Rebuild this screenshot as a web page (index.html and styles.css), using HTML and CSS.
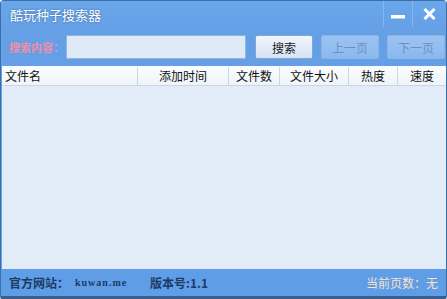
FILE: index.html
```html
<!DOCTYPE html>
<html lang="zh-cn">
<head>
    <meta charset="UTF-8">
    <title>酷玩种子搜索器</title>
    <link rel="stylesheet" href="styles.css">
</head>
<body>

<div class="window">
    <div class="titlebar">
        <span class="title">酷玩种子搜索器</span>
        <div class="controls">
            <span class="ctl min"><svg width="14" height="4" viewBox="0 0 14 4"><rect width="14" height="3.5" fill="#fff"/></svg></span>
            <span class="ctl close"><svg width="13" height="12" viewBox="0 0 13 12"><path d="M1.5 1 L11.5 11 M11.5 1 L1.5 11" stroke="#fff" stroke-width="3"/></svg></span>
        </div>
    </div>

    <div class="searchbar">
        <label class="lbl" for="q">搜索内容：</label>
        <input type="text" id="q" class="query">
        <button class="btn">搜索</button>
        <button class="btn off">上一页</button>
        <button class="btn off">下一页</button>
    </div>

    <div class="list">
        <div class="head">
            <span class="col c-name">文件名</span>
            <span class="col c-time">添加时间</span>
            <span class="col c-num">文件数</span>
            <span class="col c-size">文件大小</span>
            <span class="col c-hot">热度</span>
            <span class="col c-speed">速度</span>
        </div>
        <div class="rows"></div>
    </div>

    <div class="status">
        <span class="site">官方网站：</span>
        <span class="url">kuwan.me</span>
        <span class="ver">版本号:1.1</span>
        <span class="page">当前页数：无</span>
    </div>
</div>

</body>
</html>
```

FILE: styles.css
```css
* {
    box-sizing: border-box;
    margin: 0;
    padding: 0;
}
body {
    font-family: 'Noto Sans CJK SC', 'DejaVu Sans', sans-serif;
    font-size: 12px;
    background-color: #fff;
    width: 447px;
    height: 299px;
    overflow: hidden;
}
.window {
    width: 447px;
    height: 299px;
    display: flex;
    flex-direction: column;
    background-color: #65a0e6;
    border: 1px solid #3c6ea8;
    border-bottom: 3px solid #3a5f8e;
    border-radius: 4px 4px 2px 2px;
}
.titlebar {
    height: 30px;
    display: flex;
    align-items: flex-start;
    justify-content: space-between;
    background: linear-gradient(#6aa6ea, #65a0e6);
}
.title {
    color: #fff;
    font-size: 13px;
    line-height: 28px;
    padding-left: 9px;
    text-shadow: 0 0 2px #2d5a90;
}
.controls {
    display: flex;
    height: 26px;
}
.ctl {
    width: 29px;
    height: 26px;
    display: flex;
    align-items: center;
    justify-content: center;
    border-left: 1px solid #86b6ee;
}
.ctl.min svg {
    margin-top: 5px;
}
.ctl.close {
    width: 34px;
}
.searchbar {
    height: 35px;
    display: flex;
    align-items: flex-start;
    padding: 4px 0 0 8px;
}
.lbl {
    color: #f58ca4;
    font-size: 11px;
    font-weight: bold;
    line-height: 22px;
    width: 57px;
    padding-top: 1px;
    white-space: nowrap;
}
.query {
    width: 180px;
    height: 24px;
    border: 1px solid #8fb5e0;
    background-color: #dfeaf7;
    margin-right: 9px;
}
.btn {
    width: 58px;
    height: 24px;
    font-family: inherit;
    font-size: 12px;
    color: #222;
    border: 1px solid #7ea7d6;
    border-radius: 2px;
    background: linear-gradient(#f0f5fc, #d6e4f5);
    margin-right: 8px;
}
.btn.off {
    color: #6f90bf;
    border-color: #8ab4e4;
    background: linear-gradient(#9cc4f2, #8ab8ee);
}
.btn.off:last-child {
    margin-right: 0;
}
.list {
    flex: 1;
    display: flex;
    flex-direction: column;
    background-color: #e1ecf8;
    margin-left: 1px;
}
.head {
    height: 20px;
    display: flex;
    align-items: center;
    background: linear-gradient(#fbfdff, #eef4fb);
    border-bottom: 1px solid #c7d6e8;
    color: #111;
}
.col {
    height: 18px;
    line-height: 18px;
    text-align: center;
    border-left: 1px solid #c9d6e4;
}
.c-name {
    width: 135px;
    text-align: left;
    padding-left: 3px;
    border-left: none;
}
.c-time { width: 91px; }
.c-num { width: 51px; }
.c-size { width: 69px; }
.c-hot { width: 49px; }
.c-speed { flex: 1; }
.rows {
    flex: 1;
}
.status {
    height: 27px;
    display: flex;
    align-items: center;
    padding: 0 8px;
    background-color: #5f9de6;
    font-weight: bold;
    color: #1b3a66;
}
.site {
    width: 66px;
}
.url {
    font-family: 'Liberation Serif', serif;
    font-size: 10px;
    letter-spacing: 1px;
    width: 75px;
}
.page {
    margin-left: auto;
    color: #f7e2c8;
    font-weight: normal;
}
```
